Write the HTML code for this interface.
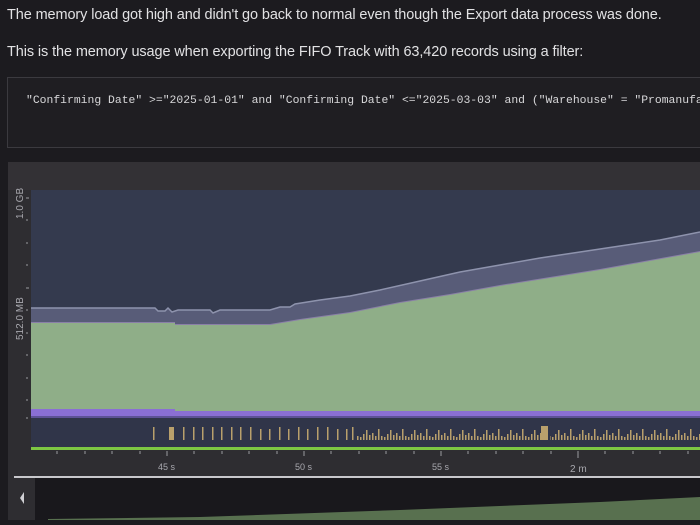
<!DOCTYPE html>
<html><head><meta charset="utf-8"><style>
html,body{margin:0;padding:0;background:#1c1b1f;width:700px;height:525px;overflow:hidden}
body{font-family:"Liberation Sans",sans-serif;color:#e2e2e4;font-size:15px;position:relative}
.t{position:absolute;left:7px;white-space:nowrap;letter-spacing:-0.1px;transform:scaleX(0.965);transform-origin:0 0}
.code{position:absolute;left:7px;top:77px;width:720px;height:71px;background:#1f1e22;border:1px solid #3b3a3f;box-sizing:border-box}
.code span{position:absolute;left:18px;top:17px;font-family:"Liberation Mono",monospace;font-size:11.4px;color:#d8d8da;white-space:nowrap}
svg{position:absolute;left:0;top:0}
</style></head><body>
<div class="t" style="top:6px">The memory load got high and didn't go back to normal even though the Export data process was done.</div>
<div class="t" style="top:43px">This is the memory usage when exporting the FIFO Track with 63,420 records using a filter:</div>
<div class="code"><span>"Confirming Date" &gt;="2025-01-01" and "Confirming Date" &lt;="2025-03-03" and ("Warehouse" = "Promanufa</span></div>
<svg width="700" height="525" viewBox="0 0 700 525">
<defs>
<pattern id="p" x="357" y="0" width="24" height="525" patternUnits="userSpaceOnUse">
<rect x="0" y="436" width="1.5" height="4" fill="#b9a06c"/>
<rect x="3" y="437" width="1.5" height="3" fill="#b9a06c"/>
<rect x="6" y="434" width="1.5" height="6" fill="#b9a06c"/>
<rect x="9" y="430" width="1.5" height="10" fill="#b9a06c"/>
<rect x="12" y="435" width="1.5" height="5" fill="#b9a06c"/>
<rect x="15" y="433" width="1.5" height="7" fill="#b9a06c"/>
<rect x="18" y="436" width="1.5" height="4" fill="#b9a06c"/>
<rect x="21" y="429" width="1.5" height="11" fill="#b9a06c"/>
</pattern>
</defs>
<rect x="8" y="162" width="692" height="316" fill="#2e2d31"/>
<rect x="8" y="162" width="692" height="28" fill="#333135"/>
<rect x="31" y="190" width="669" height="228" fill="#343a4e"/>
<path d="M31 308 L155 308 L158 311 L165 311 L168 308 L172 312 L178 310 L210 310 L213 313 L220 310 L270 310 L280 307 L290 307 L295 304 L320 300 L350 296 L380 290 L420 281 L460 272 L500 265 L540 258 L580 252 L620 246 L660 240 L700 232 L700 420 L31 420Z" fill="#585c78"/>
<path d="M31 308 L155 308 L158 311 L165 311 L168 308 L172 312 L178 310 L210 310 L213 313 L220 310 L270 310 L280 307 L290 307 L295 304 L320 300 L350 296 L380 290 L420 281 L460 272 L500 265 L540 258 L580 252 L620 246 L660 240 L700 232" fill="none" stroke="#8e93ad" stroke-width="1.5"/>
<path d="M31 322 L175 322 L175 324 L270 324 L300 319 L350 312 L400 302 L450 294 L500 285 L550 277 L600 269 L650 260 L700 251 L700 420 L31 420Z" fill="#8a7fa8"/>
<path d="M31 323 L175 323 L175 325 L270 325 L300 320 L350 313 L400 303 L450 295 L500 286 L550 278 L600 270 L650 261 L700 252 L700 420 L31 420Z" fill="#8fae88"/>
<path d="M31 409 L175 409 L175 411 L700 411 L700 418 L31 418Z" fill="#8a6fd4"/>
<rect x="31" y="416" width="669" height="2" fill="#5d5296"/>
<rect x="31" y="418" width="669" height="30" fill="#303549"/>
<g fill="#b9a06c">
<rect x="153" y="427" width="1.5" height="13"/><rect x="169" y="427" width="5" height="13"/>
<rect x="183" y="427" width="1.5" height="13"/><rect x="193" y="427" width="1.5" height="13"/><rect x="202" y="427" width="1.5" height="13"/><rect x="212" y="427" width="1.5" height="13"/><rect x="221" y="427" width="1.5" height="13"/><rect x="231" y="427" width="1.5" height="13"/><rect x="240" y="427" width="1.5" height="13"/><rect x="250" y="427" width="1.5" height="13"/><rect x="260" y="429" width="1.5" height="11"/><rect x="269" y="429" width="1.5" height="11"/><rect x="279" y="427" width="1.5" height="13"/><rect x="288" y="429" width="1.5" height="11"/><rect x="298" y="427" width="1.5" height="13"/><rect x="307" y="429" width="1.5" height="11"/><rect x="317" y="427" width="1.5" height="13"/><rect x="327" y="427" width="1.5" height="13"/><rect x="337" y="429" width="1.5" height="11"/><rect x="346" y="429" width="1.5" height="11"/><rect x="352" y="427" width="1.5" height="13"/>
<rect x="541" y="426" width="7" height="14"/>
</g>
<rect x="357" y="420" width="184" height="22" fill="url(#p)"/>
<rect x="550" y="420" width="150" height="22" fill="url(#p)"/>
<rect x="31" y="447" width="669" height="3" fill="#7dc743"/>
<g stroke="#9a9aa0" stroke-width="1">
<path d="M57 451v3M85 451v3M112 451v3M140 451v3M167 451v5M194 451v3M222 451v3M249 451v3M277 451v3M304 451v5M331 451v3M359 451v3M386 451v3M414 451v3M441 451v5M468 451v3M496 451v3M523 451v3M551 451v3M578 451v7M605 451v3M633 451v3M660 451v3M688 451v3"/>
<path d="M26 198h3M26 220h2M26 243h2M26 265h2M26 288h3M26 310h2M26 333h2M26 355h2M26 378h2M26 400h2M26 418h2"/>
</g>
<g fill="#a8a8ae" font-family="Liberation Sans,sans-serif" font-size="9">
<text x="158" y="470">45 s</text><text x="295" y="470">50 s</text><text x="432" y="470">55 s</text><text x="570" y="472" font-size="10">2 m</text>
<text transform="translate(23,219) rotate(-90)" font-size="10">1.0 GB</text>
<text transform="translate(23,340) rotate(-90)" font-size="10">512.0 MB</text>
</g>
<rect x="14" y="476" width="686" height="2" fill="#c8c8cc"/>
<rect x="8" y="478" width="692" height="42" fill="#19181c"/>
<rect x="8" y="478" width="27" height="42" fill="#2e2d31"/>
<path d="M24 492 L20 498 L24 504Z" fill="#d0d0d4"/>
<path d="M48 519 L200 517 L400 510 L600 502 L700 497 L700 520 L48 520Z" fill="#58704f"/>
</svg>
</body></html>
